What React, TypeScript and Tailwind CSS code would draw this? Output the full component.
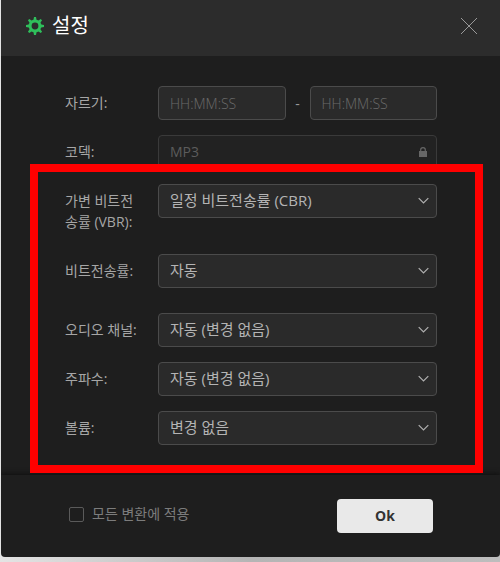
import React from "react";

const fontStack = "font-['Open_Sans','Noto_Sans_CJK_KR',sans-serif]";
const labelClass = "w-[93px] shrink-0 pt-1.5 pr-4 text-[14px] leading-[21px] text-[#a6a6a6]";
const fieldClass =
  "h-[34px] w-full min-w-0 rounded border border-[#4b4b4b] bg-[#2a2a2a] px-[11px] outline-none";

type SelectRowProps = {
  id: string;
  label: string;
  value: string;
  className?: string;
};

function SelectRow({ id, label, value, className = "" }: SelectRowProps) {
  return (
    <div className={`flex items-start ${className}`}>
      <label htmlFor={id} className={labelClass}>
        {label}
      </label>
      <div className="relative min-w-0 flex-1">
        <select id={id} className={`${fieldClass} block appearance-none pb-0.5 text-[15px] text-[#b4b4b4]`}>
          <option>{value}</option>
        </select>
        <svg
          className="pointer-events-none absolute top-3 right-2 h-[10px] w-[11px]"
          viewBox="0 0 11 10"
          fill="none"
          stroke="#b0b0b0"
          strokeWidth="1.2"
          aria-hidden="true"
        >
          <path d="M.7 2.2 5.5 7 10.3 2.2" />
        </svg>
      </div>
    </div>
  );
}

function GearIcon() {
  return (
    <svg className="h-[18px] w-[18px]" viewBox="0 0 18 18" aria-hidden="true">
      <g fill="#2fbf5b">
        {[0, 45, 90, 135, 180, 225, 270, 315].map((angle) => (
          <path key={angle} d="M7.3 4 8 0h2l.7 4z" transform={`rotate(${angle} 9 9)`} />
        ))}
      </g>
      <circle cx="9" cy="9" r="4.9" fill="none" stroke="#2fbf5b" strokeWidth="3" />
    </svg>
  );
}

export default function App() {
  return (
    <div className={`bg-linear-to-r from-[#e4e4e4] via-[#b5b5b5] to-[#bdbdbd] pb-[5px] pl-px ${fontStack}`}>
      <div role="dialog" aria-labelledby="title" className="overflow-hidden rounded-b bg-[#1e1e1e]">
        <header className="flex h-14 items-center bg-[#2c2c2c] pr-[23px] pb-1 pl-[25px]">
          <GearIcon />
          <h1 id="title" className="ml-2 flex-1 text-[20px] leading-6 text-white">
            설정
          </h1>
          <button type="button" aria-label="닫기" className="h-4 w-4">
            <svg viewBox="0 0 16 16" fill="none" stroke="#999" strokeWidth="1" aria-hidden="true">
              <path d="M0 0 16 16M16 0 0 16" />
            </svg>
          </button>
        </header>

        <main className="relative pt-[30px] pr-[63px] pb-[30px] pl-16">
          <div className="mb-[15px] flex items-start">
            <label htmlFor="start" className={labelClass}>
              자르기:
            </label>
            <div className="flex min-w-0 flex-1 items-center">
              <input
                id="start"
                placeholder="HH:MM:SS"
                className={`${fieldClass} flex-1 text-[14px] font-light placeholder:text-[#6a6a6a]`}
              />
              <span className="w-6 shrink-0 text-center text-[14px] text-[#999]">-</span>
              <input
                aria-label="자르기 끝"
                placeholder="HH:MM:SS"
                className={`${fieldClass} flex-1 text-[14px] font-light placeholder:text-[#6a6a6a]`}
              />
            </div>
          </div>

          <div className="mb-[15px] flex items-start">
            <label htmlFor="codec" className={labelClass}>
              코덱:
            </label>
            <div className="relative min-w-0 flex-1">
              <input
                id="codec"
                disabled
                defaultValue="MP3"
                className="block h-[34px] w-full rounded border border-[#3a3a3a] bg-[#222] px-[11px] pb-0.5 text-[14px] text-[#5c5c5c]"
              />
              <svg className="absolute top-3 right-2.5 h-[10px] w-2" viewBox="0 0 8 10" aria-hidden="true">
                <path d="M0 4h8v6H0z" fill="#666" />
                <path d="M1.7 4.5V2.8a2.3 2.1 0 0 1 4.6 0v1.7" fill="none" stroke="#666" strokeWidth="1.2" />
              </svg>
            </div>
          </div>

          <SelectRow id="vbr" label="가변 비트전송률 (VBR):" value="일정 비트전송률 (CBR)" className="mb-[22px]" />
          <SelectRow id="bitrate" label="비트전송률:" value="자동" className="mb-[25px]" />
          <SelectRow id="channel" label="오디오 채널:" value="자동 (변경 없음)" className="mb-[15px]" />
          <SelectRow id="frequency" label="주파수:" value="자동 (변경 없음)" className="mb-[15px]" />
          <SelectRow id="volume" label="볼륨:" value="변경 없음" />

          <div className="pointer-events-none absolute top-[108px] right-[17px] bottom-0.5 left-[29px] border-8 border-[#f00]" />
        </main>

        <footer className="flex h-[82px] items-center justify-between pr-[67px] pl-[68px] shadow-[0_-1px_5px_#0e0e0e]">
          <label className="flex items-center gap-2 pb-1 text-[14px] leading-5 text-[#7c7c7c]">
            <input
              type="checkbox"
              className="h-[15px] w-[15px] appearance-none rounded-[2px] border border-[#5a5a5a]"
            />
            모든 변환에 적용
          </label>
          <button type="button" className="h-[34px] w-24 rounded bg-[#e9e9e9] pb-0.5 text-[14px] font-bold text-[#333]">
            Ok
          </button>
        </footer>
      </div>
    </div>
  );
}
